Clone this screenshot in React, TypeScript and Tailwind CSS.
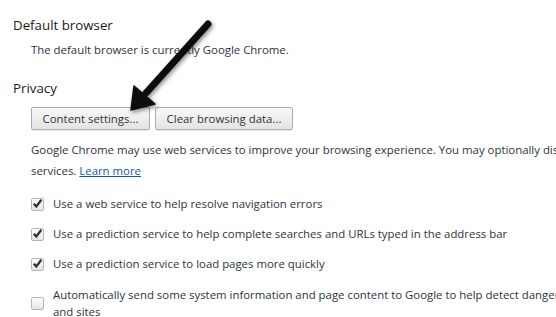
import React from "react";

function Checkbox({ checked }: { checked: boolean }) {
  return (
    <span className="flex h-[13px] w-[13px] shrink-0 items-center justify-center rounded-[2px] border border-[#b5b5b5] bg-gradient-to-b from-[#fcfcfc] to-[#e6e6e6]">
      {checked && (
        <svg width="11" height="11" viewBox="0 0 11 11" className="-mt-[1px]">
          <path d="M1.8 5.8 L4.3 8.4 L9.4 1.8" fill="none" stroke="#333" strokeWidth="2.3" strokeLinejoin="miter" />
        </svg>
      )}
    </span>
  );
}

function Button({ children }: { children: React.ReactNode }) {
  return (
    <button className="flex h-[23px] items-center justify-center rounded-[2px] border border-[#acacac] bg-gradient-to-b from-[#f8f8f8] to-[#e4e4e4] text-[11.4px] text-[#333] shadow-[0_1px_0_rgba(0,0,0,0.08)]">
      {children}
    </button>
  );
}

function Row({ children, checked }: { children: React.ReactNode; checked: boolean }) {
  return (
    <div className="flex items-center gap-[9px]">
      <Checkbox checked={checked} />
      <div className="whitespace-nowrap">{children}</div>
    </div>
  );
}

export default function App() {
  return (
    <div className="relative h-[317px] w-[556px] overflow-hidden bg-white font-['Open_Sans',sans-serif] text-[#2c3440]">
      <div className="flex w-[700px] flex-col pl-[13px] pt-[15px]">
        <h3 className="text-[13.3px] leading-[20px] text-[#1a1a1a]">Default browser</h3>
        <div className="mt-[5px] pl-[18px] text-[11.4px] leading-[20px]">
          The default browser is currently Google Chrome.
        </div>
        <h3 className="mt-[18px] text-[13.3px] leading-[20px] text-[#1a1a1a]">Privacy</h3>
        <div className="mt-[9px] flex gap-[5px] pl-[18px]">
          <Button>
            <span className="w-[117px]">Content settings...</span>
          </Button>
          <Button>
            <span className="w-[136px]">Clear browsing data...</span>
          </Button>
        </div>
        <div className="mt-[9px] whitespace-nowrap pl-[18px] text-[11.4px] leading-[21px]">
          Google Chrome may use web services to improve your browsing experience. You may optionally disable these
          <br />
          services.{" "}
          <a className="text-[#1155cc] underline" href="#">
            Learn more
          </a>
        </div>
        <div className="mt-[13px] flex flex-col gap-[10px] pl-[18px] text-[11.4px] leading-[20px]">
          <Row checked>Use a web service to help resolve navigation errors</Row>
          <Row checked>Use a prediction service to help complete searches and URLs typed in the address bar</Row>
          <Row checked>Use a prediction service to load pages more quickly</Row>
          <div className="mt-[2px] flex items-center gap-[9px] leading-[17px]">
            <Checkbox checked={false} />
            <div className="whitespace-nowrap">
              Automatically send some system information and page content to Google to help detect dangerous apps
              <br />
              and sites
            </div>
          </div>
        </div>
      </div>
      <svg className="pointer-events-none absolute left-0 top-0" width="556" height="317" viewBox="0 0 556 317">
        <defs>
          <filter id="sh" x="-30%" y="-30%" width="160%" height="160%">
            <feDropShadow dx="1.5" dy="2" stdDeviation="2" floodColor="#000" floodOpacity="0.45" />
          </filter>
        </defs>
        <g filter="url(#sh)">
          <line x1="208" y1="24" x2="146" y2="93" stroke="#111" strokeWidth="7" strokeLinecap="round" />
          <polygon points="131,110 134,86 155,104" fill="#111" strokeLinejoin="round" stroke="#111" strokeWidth="1.5" />
        </g>
      </svg>
    </div>
  );
}
